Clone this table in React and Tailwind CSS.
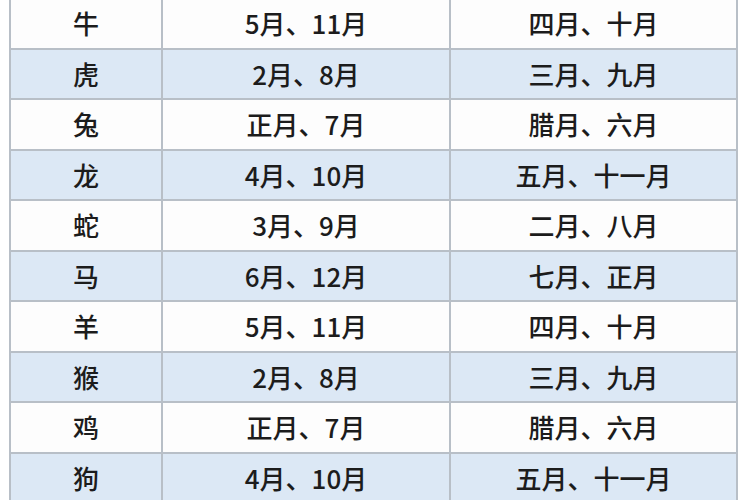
const rows = [
  ['牛', '5月、11月', '四月、十月'],
  ['虎', '2月、8月', '三月、九月'],
  ['兔', '正月、7月', '腊月、六月'],
  ['龙', '4月、10月', '五月、十一月'],
  ['蛇', '3月、9月', '二月、八月'],
  ['马', '6月、12月', '七月、正月'],
  ['羊', '5月、11月', '四月、十月'],
  ['猴', '2月、8月', '三月、九月'],
  ['鸡', '正月、7月', '腊月、六月'],
  ['狗', '4月、10月', '五月、十一月'],
]

export default function App() {
  return (
    <div className="w-[750px] h-[500px] overflow-hidden bg-white pl-[9px] font-['Noto_Sans_CJK_SC','Noto_Sans',sans-serif] text-[#1c1c1c]">
      <div className="w-[729px] -mt-[3px] border-x-2 border-t-2 border-[#b8bfc7]">
        {rows.map(([animal, solar, lunar], i) => (
          <div
            key={i}
            className={`grid grid-cols-[152px_288px_285px] h-[50.5px] border-b-2 border-[#b8bfc7] text-[26px] leading-none font-medium ${
              i % 2 === 1 ? 'bg-[#dce8f5]' : 'bg-[#fdfdfd]'
            }`}
          >
            <div className="flex items-center justify-center border-r-2 border-[#b8bfc7]">{animal}</div>
            <div className="flex items-center justify-center border-r-2 border-[#b8bfc7]">{solar}</div>
            <div className="flex items-center justify-center">{lunar}</div>
          </div>
        ))}
      </div>
    </div>
  )
}
